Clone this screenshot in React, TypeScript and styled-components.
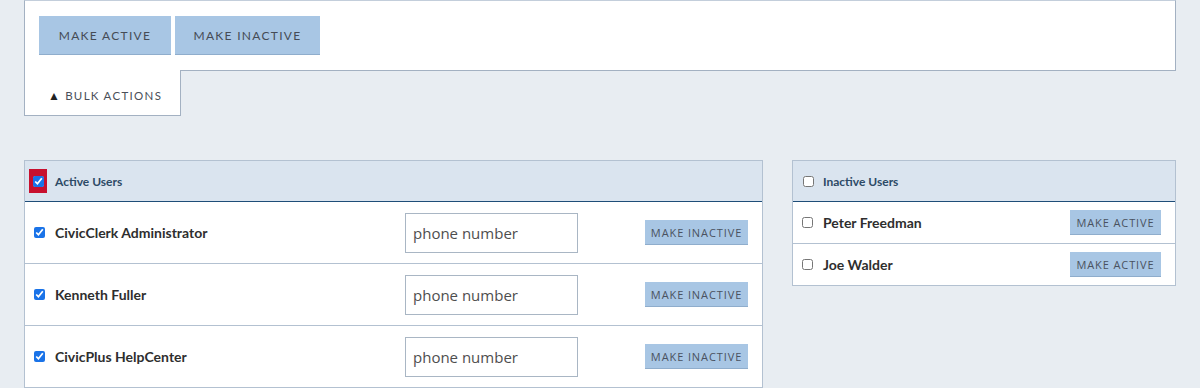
import React, { useState } from "react";
import styled, { createGlobalStyle } from "styled-components";

const GlobalStyle = createGlobalStyle`
    body {
        margin: 0;
        background: #e8edf2;
        font-family: "Lato", "Noto Sans", sans-serif;
        color: #2b2b2b;
    }
`;

interface User {
    name: string;
    checked: boolean;
}

const activeUsers: User[] = [
    { name: "CivicClerk Administrator", checked: true },
    { name: "Kenneth Fuller", checked: true },
    { name: "CivicPlus HelpCenter", checked: true },
];

const inactiveUsers: User[] = [
    { name: "Peter Freedman", checked: false },
    { name: "Joe Walder", checked: false },
];

const App = () => {
    const [active, setActive] = useState(activeUsers);
    const [inactive, setInactive] = useState(inactiveUsers);

    const toggle = (list: User[], set: (u: User[]) => void, idx: number) => {
        set(list.map((u, i) => (i === idx ? { ...u, checked: !u.checked } : u)));
    };

    return (
        <>
            <GlobalStyle />
            <StyledPage>
                <StyledBulkPanel>
                    <StyledBulkButton $width={132}>Make Active</StyledBulkButton>
                    <StyledBulkButton $width={145}>Make Inactive</StyledBulkButton>
                </StyledBulkPanel>
                <StyledBulkTab>
                    <span>▲</span> Bulk Actions
                </StyledBulkTab>

                <StyledLists>
                    <StyledListPanel>
                        <StyledListHeader>
                            <StyledFocusRing>
                                <StyledCheckbox type="checkbox" checked readOnly />
                            </StyledFocusRing>
                            Active Users
                        </StyledListHeader>
                        {active.map((user, idx) => (
                            <StyledUserRow key={user.name} $tall>
                                <StyledCheckbox
                                    type="checkbox"
                                    checked={user.checked}
                                    onChange={() => toggle(active, setActive, idx)}
                                />
                                <StyledUserName>{user.name}</StyledUserName>
                                <StyledPhoneInput placeholder="phone number" />
                                <StyledRowButton $width={103}>Make Inactive</StyledRowButton>
                            </StyledUserRow>
                        ))}
                    </StyledListPanel>

                    <StyledListPanel $short>
                        <StyledListHeader>
                            <StyledPlainCheck>
                                <StyledCheckbox type="checkbox" readOnly checked={false} />
                            </StyledPlainCheck>
                            Inactive Users
                        </StyledListHeader>
                        {inactive.map((user, idx) => (
                            <StyledUserRow key={user.name}>
                                <StyledCheckbox
                                    type="checkbox"
                                    checked={user.checked}
                                    onChange={() => toggle(inactive, setInactive, idx)}
                                />
                                <StyledUserName>{user.name}</StyledUserName>
                                <StyledRowButton $width={91}>Make Active</StyledRowButton>
                            </StyledUserRow>
                        ))}
                    </StyledListPanel>
                </StyledLists>
            </StyledPage>
        </>
    );
};

const StyledPage = styled.div`
    padding: 0 24px;
`;

const StyledBulkPanel = styled.div`
    display: flex;
    gap: 4px;
    height: 54px;
    padding: 15px 0 0 14px;
    background: #ffffff;
    border: 1px solid #a3b1c2;
    border-top-color: #c3cedb;
`;

const StyledBulkButton = styled.button<{ $width: number }>`
    width: ${(p) => p.$width}px;
    height: 39px;
    padding: 0;
    border: none;
    border-bottom: 1px solid #8fadcc;
    background: #a8c6e4;
    color: #454b55;
    font-family: "Lato", "Noto Sans", sans-serif;
    font-size: 12px;
    letter-spacing: 1.3px;
    text-transform: uppercase;
    cursor: pointer;
`;

const StyledBulkTab = styled.div`
    width: 157px;
    height: 46px;
    margin-top: -1px;
    box-sizing: border-box;
    padding: 18px 0 0 23px;
    background: #ffffff;
    border: 1px solid #a3b1c2;
    border-top: none;
    color: #4a4f59;
    font-size: 11.5px;
    letter-spacing: 1.3px;
    text-transform: uppercase;
    span {
        color: #222;
        font-size: 12px;
        letter-spacing: 0;
        margin-right: 1px;
    }
`;

const StyledLists = styled.div`
    display: grid;
    grid-template-columns: 1fr 384px;
    align-items: start;
    column-gap: 29px;
    margin-top: 44px;
`;

const StyledListPanel = styled.div<{ $short?: boolean }>`
    background: #ffffff;
    border: 1px solid #b3c1d1;
    border-bottom: ${(p) => (p.$short ? "1px solid #b3c1d1" : "none")};
`;

const StyledListHeader = styled.div`
    display: flex;
    align-items: center;
    height: 40px;
    padding-left: 4px;
    background: #dae4ef;
    border-bottom: 1px solid #1e4d78;
    color: #2d4a66;
    font-size: 12px;
    font-weight: 700;
`;

const StyledFocusRing = styled.span`
    display: inline-flex;
    align-items: center;
    justify-content: center;
    width: 18px;
    height: 24px;
    margin-right: 8px;
    background: #c8102e;
    input {
        margin: 0;
    }
`;

const StyledPlainCheck = styled.span`
    display: inline-flex;
    width: 18px;
    justify-content: center;
    margin: 0 6px 0 2px;
    input {
        margin: 0;
    }
`;

const StyledCheckbox = styled.input`
    width: 11px;
    height: 11px;
    margin: 0 10px 0 5px;
    accent-color: #1a73e8;
`;

const StyledUserRow = styled.div<{ $tall?: boolean }>`
    display: flex;
    align-items: center;
    height: ${(p) => (p.$tall ? "61px" : "41px")};
    padding: 0 14px 0 4px;
    border-bottom: 1px solid #b3c1d1;
    &:last-child {
        border-bottom: ${(p) => (p.$tall ? "1px solid #b3c1d1" : "none")};
    }
    input[type="checkbox"] {
        margin: 0 10px 0 5px;
    }
`;

const StyledUserName = styled.span`
    flex: 1;
    font-size: 14px;
    font-weight: 700;
    color: #2e2e2e;
`;

const StyledPhoneInput = styled.input`
    width: 173px;
    height: 40px;
    box-sizing: border-box;
    margin-right: 67px;
    padding: 0 7px;
    border: 1px solid #a9b6c4;
    font-family: "Open Sans", sans-serif;
    font-size: 15px;
    color: #333;
    &::placeholder {
        color: #4e4e4e;
    }
`;

const StyledRowButton = styled.button<{ $width: number }>`
    width: ${(p) => p.$width}px;
    height: 25px;
    padding: 0;
    border: none;
    border-bottom: 1px solid #8fadcc;
    background: #a8c6e4;
    color: #4a5260;
    font-family: "Open Sans", sans-serif;
    font-size: 11px;
    letter-spacing: 0.9px;
    text-transform: uppercase;
    cursor: pointer;
`;

export default App;
